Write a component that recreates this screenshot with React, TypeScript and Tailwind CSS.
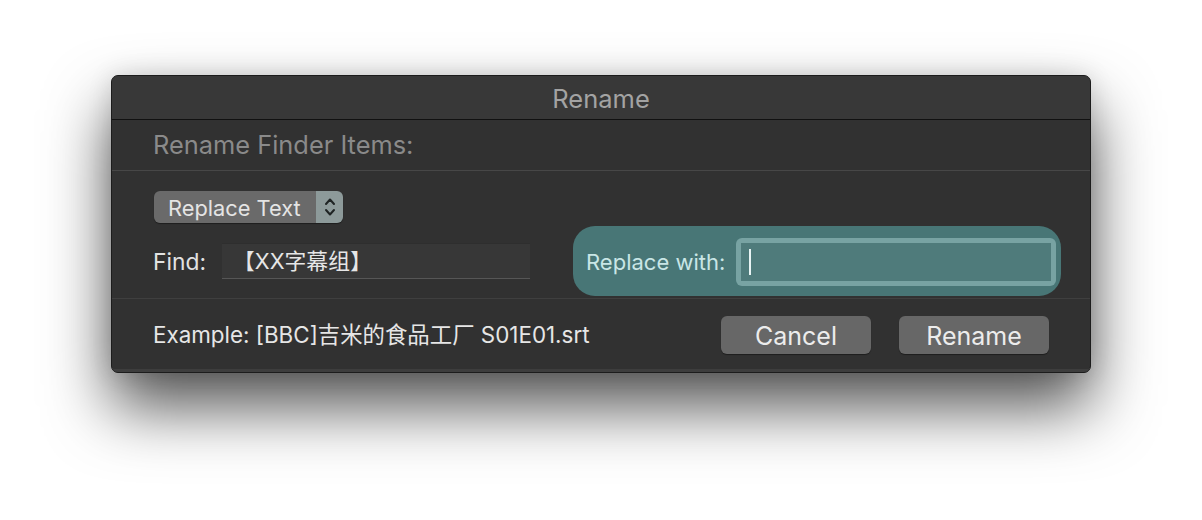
import React from "react";

const font = { fontFamily: 'Inter, "Noto Sans CJK SC", sans-serif' };

export default function App() {
  return (
    <div
      className="w-[1202px] h-[520px] bg-white pt-[75px] pl-[111px] overflow-hidden"
      style={font}
    >
      <div className="w-[980px] h-[298px] rounded-[7px] border border-[#1c1c1c] bg-[#313131] shadow-[0_34px_64px_rgba(0,0,0,0.68),0_0_24px_rgba(0,0,0,0.12)] flex flex-col overflow-hidden">
        {/* Title bar */}
        <div className="h-[44px] shrink-0 bg-[#383838] border-b border-[#111] flex items-center justify-center pt-[3px]">
          <span className="text-[25.5px] text-[#a3a3a3] leading-none">Rename</span>
        </div>
        {/* Header section */}
        <div className="h-[51px] shrink-0 border-b border-[#474747] flex items-center pl-[41px]">
          <span className="text-[25.4px] text-[#8a8a8a] leading-none">Rename Finder Items:</span>
        </div>
        {/* Options section */}
        <div className="h-[128px] shrink-0 border-b border-[#3f3f3f] flex flex-col pl-[41px] pr-[29px] pt-[20px]">
          <div className="flex h-[32px] w-[189px] rounded-[6px] overflow-hidden shadow-[0_1px_1px_rgba(0,0,0,0.4)] ml-[1px]">
            <div className="flex-1 bg-[#6a6a6a] flex items-center pl-[14px] pt-[3px]">
              <span className="text-[21.8px] text-[#e4e4e4] leading-none">Replace Text</span>
            </div>
            <div className="w-[27px] bg-[#8d9a9a] flex items-center justify-center">
              <svg width="14" height="24" viewBox="0 0 14 24" fill="none" stroke="#1f2424" strokeWidth="2" strokeLinecap="round" strokeLinejoin="round">
                <path d="M3 9 L7 4.5 L11 9" />
                <path d="M3 15 L7 19.5 L11 15" />
              </svg>
            </div>
          </div>
          <div className="flex items-center mt-[3px] h-[70px]">
            <span className="text-[22.8px] text-[#e2e2e2] leading-none w-[69px] pt-[2px]">Find:</span>
            <div className="w-[308px] h-[36px] bg-[#373737] border-t border-[#2e2e2e] border-b border-b-[#565656] flex items-center pl-[11px] pt-[2px]">
              <span className="text-[21.8px] text-[#e6e6e6] leading-none">【XX字幕组】</span>
            </div>
            <div className="ml-[43px] flex-1 h-[70px] rounded-[22px] bg-[#487676] flex items-center pl-[13px] pr-[5px]">
              <span className="text-[22px] text-[#c9e6e6] leading-none w-[150px] pt-[2px]">Replace with:</span>
              <div className="flex-1 h-[48px] rounded-[6px] bg-[#78a3a3] p-[5px] mt-[2px]">
                <div className="w-full h-full bg-[#4f7b7b] flex items-center pl-[8px]">
                  <div className="w-[2px] h-[26px] bg-[#e8f4f4]" />
                </div>
              </div>
            </div>
          </div>
        </div>
        {/* Footer */}
        <div className="flex-1 flex items-center pl-[41px] pr-[41px] border-b-[3px] border-[#3d3d3d]">
          <span className="text-[22.4px] text-[#e6e6e6] leading-none pt-[3px]">Example: [BBC]吉米的食品工厂 S01E01.srt</span>
          <div className="ml-auto flex gap-[28px] mt-[1px]">
            <button className="w-[150px] h-[38px] rounded-[6px] bg-[#676767] text-[25px] text-[#ececec] leading-none pt-[3px] shadow-[0_1px_1px_rgba(0,0,0,0.4)]">
              Cancel
            </button>
            <button className="w-[150px] h-[38px] rounded-[6px] bg-[#676767] text-[25px] text-[#ececec] leading-none pt-[3px] shadow-[0_1px_1px_rgba(0,0,0,0.4)]">
              Rename
            </button>
          </div>
        </div>
      </div>
    </div>
  );
}
